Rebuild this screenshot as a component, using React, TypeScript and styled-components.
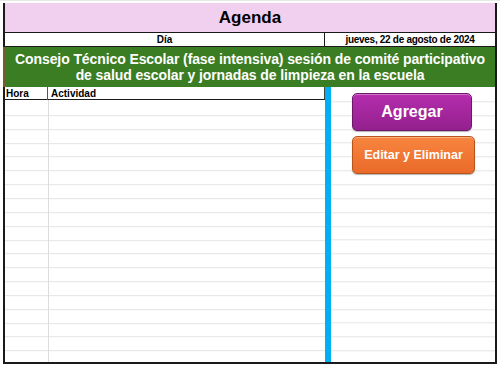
import styled, { createGlobalStyle } from 'styled-components';

const GlobalStyle = createGlobalStyle`
  html, body {
    margin: 0;
    padding: 0;
    background: #ffffff;
  }
  body {
    font-family: 'Liberation Sans', Arial, sans-serif;
    color: #000000;
  }
`;

const ROW = 13.85;

const App = () => {
  return (
    <Page>
      <GlobalStyle />
      <Sheet>
        <Title>Agenda</Title>
        <DateRow>
          <DayLabel>Día</DayLabel>
          <DateCell>jueves, 22 de agosto de 2024</DateCell>
        </DateRow>
        <Banner>
          Consejo Técnico Escolar (fase intensiva) sesión de comité participativo
          <br />
          de salud escolar y jornadas de limpieza en la escuela
        </Banner>
        <Body>
          <Table>
            <HeaderRow>
              <HourHead>Hora</HourHead>
              <ActivityHead>Actividad</ActivityHead>
            </HeaderRow>
            <Rows>
              <HourColumn />
            </Rows>
          </Table>
          <Divider />
          <Actions>
            <ActionButton $tone="purple">Agregar</ActionButton>
            <ActionButton $tone="orange">Editar y Eliminar</ActionButton>
          </Actions>
        </Body>
      </Sheet>
    </Page>
  );
};

export default App;

const gridLines = `repeating-linear-gradient(
  to bottom,
  transparent 0,
  transparent ${ROW - 1}px,
  #e4e4e4 ${ROW - 1}px,
  #e4e4e4 ${ROW}px
)`;

const Page = styled.div`
  width: 500px;
  height: 371px;
  padding-top: 3px;
  box-sizing: border-box;
  border-top: 1px solid #e8e8e8;
  overflow: hidden;
`;

const Sheet = styled.div`
  margin-left: 3px;
  margin-top: -1px;
  width: 494px;
  box-sizing: border-box;
  border-left: 2px solid #1a1a1a;
  border-right: 2px solid #1a1a1a;
  border-bottom: 2px solid #1a1a1a;
  display: flex;
  flex-direction: column;
`;

const Title = styled.div`
  height: 30px;
  background: #f1cfef;
  border-bottom: 1px solid #1a1a1a;
  display: flex;
  align-items: center;
  justify-content: center;
  padding-top: 1px;
  box-sizing: border-box;
  font-size: 17px;
  font-weight: 700;
`;

const DateRow = styled.div`
  height: 13px;
  display: grid;
  grid-template-columns: 319px 1fr;
  border-bottom: 1px solid #1a1a1a;
  font-size: 10px;
  line-height: 13px;
`;

const DayLabel = styled.div`
  text-align: center;
  font-weight: 700;
`;

const DateCell = styled.div`
  border-left: 1px solid #1a1a1a;
  text-align: center;
  font-weight: 700;
  letter-spacing: -0.3px;
`;

const Banner = styled.div`
  height: 40px;
  box-sizing: border-box;
  background: #3b7d23;
  border-left: 2px solid #7a5a2a;
  margin-left: -2px;
  color: #ffffff;
  font-size: 14px;
  font-weight: 700;
  line-height: 16px;
  text-align: center;
  padding-top: 4px;
  letter-spacing: -0.1px;
  white-space: nowrap;
`;

const Body = styled.div`
  height: 275px;
  display: grid;
  grid-template-columns: 320px 6px 1fr;
`;

const Table = styled.div`
  display: flex;
  flex-direction: column;
`;

const HeaderRow = styled.div`
  height: 12px;
  display: grid;
  grid-template-columns: 43px 1fr;
  border-bottom: 1px solid #1a1a1a;
  border-right: 1px solid #444444;
  font-size: 10px;
  font-weight: 700;
  line-height: 13px;
`;

const HourHead = styled.div`
  padding-left: 1px;
  border-right: 1px solid #555555;
`;

const ActivityHead = styled.div`
  padding-left: 3px;
`;

const Rows = styled.div`
  flex: 1;
  background-image: ${gridLines};
  background-position: 0 2.15px;
  display: flex;
`;

const HourColumn = styled.div`
  width: 43px;
  border-right: 1px solid #dcdcdc;
`;

const Divider = styled.div`
  background: #00b0f0;
`;

const Actions = styled.div`
  background-image: ${gridLines};
  background-position: 0 1.3px;
  display: flex;
  flex-direction: column;
  align-items: flex-start;
  gap: 5px;
  padding: 6px 0 0 21px;
`;

const tones = {
  purple: {
    top: '#b52dae',
    bottom: '#93208d',
    edge: '#6e1769',
    size: '16px',
    width: '120px',
  },
  orange: {
    top: '#f7853f',
    bottom: '#ea6a2a',
    edge: '#b9531c',
    size: '12.5px',
    width: '123px',
  },
};

const ActionButton = styled.div<{ $tone: keyof typeof tones }>`
  width: ${({ $tone }) => tones[$tone].width};
  height: 38px;
  box-sizing: border-box;
  border-radius: 5px;
  border: 1px solid ${({ $tone }) => tones[$tone].edge};
  background: linear-gradient(
    to bottom,
    ${({ $tone }) => tones[$tone].top},
    ${({ $tone }) => tones[$tone].bottom}
  );
  box-shadow: inset 0 1px 0 rgba(255, 255, 255, 0.35), 0 1px 1px rgba(0, 0, 0, 0.3);
  color: #ffffff;
  font-size: ${({ $tone }) => tones[$tone].size};
  font-weight: 700;
  display: flex;
  align-items: center;
  justify-content: center;
`;
